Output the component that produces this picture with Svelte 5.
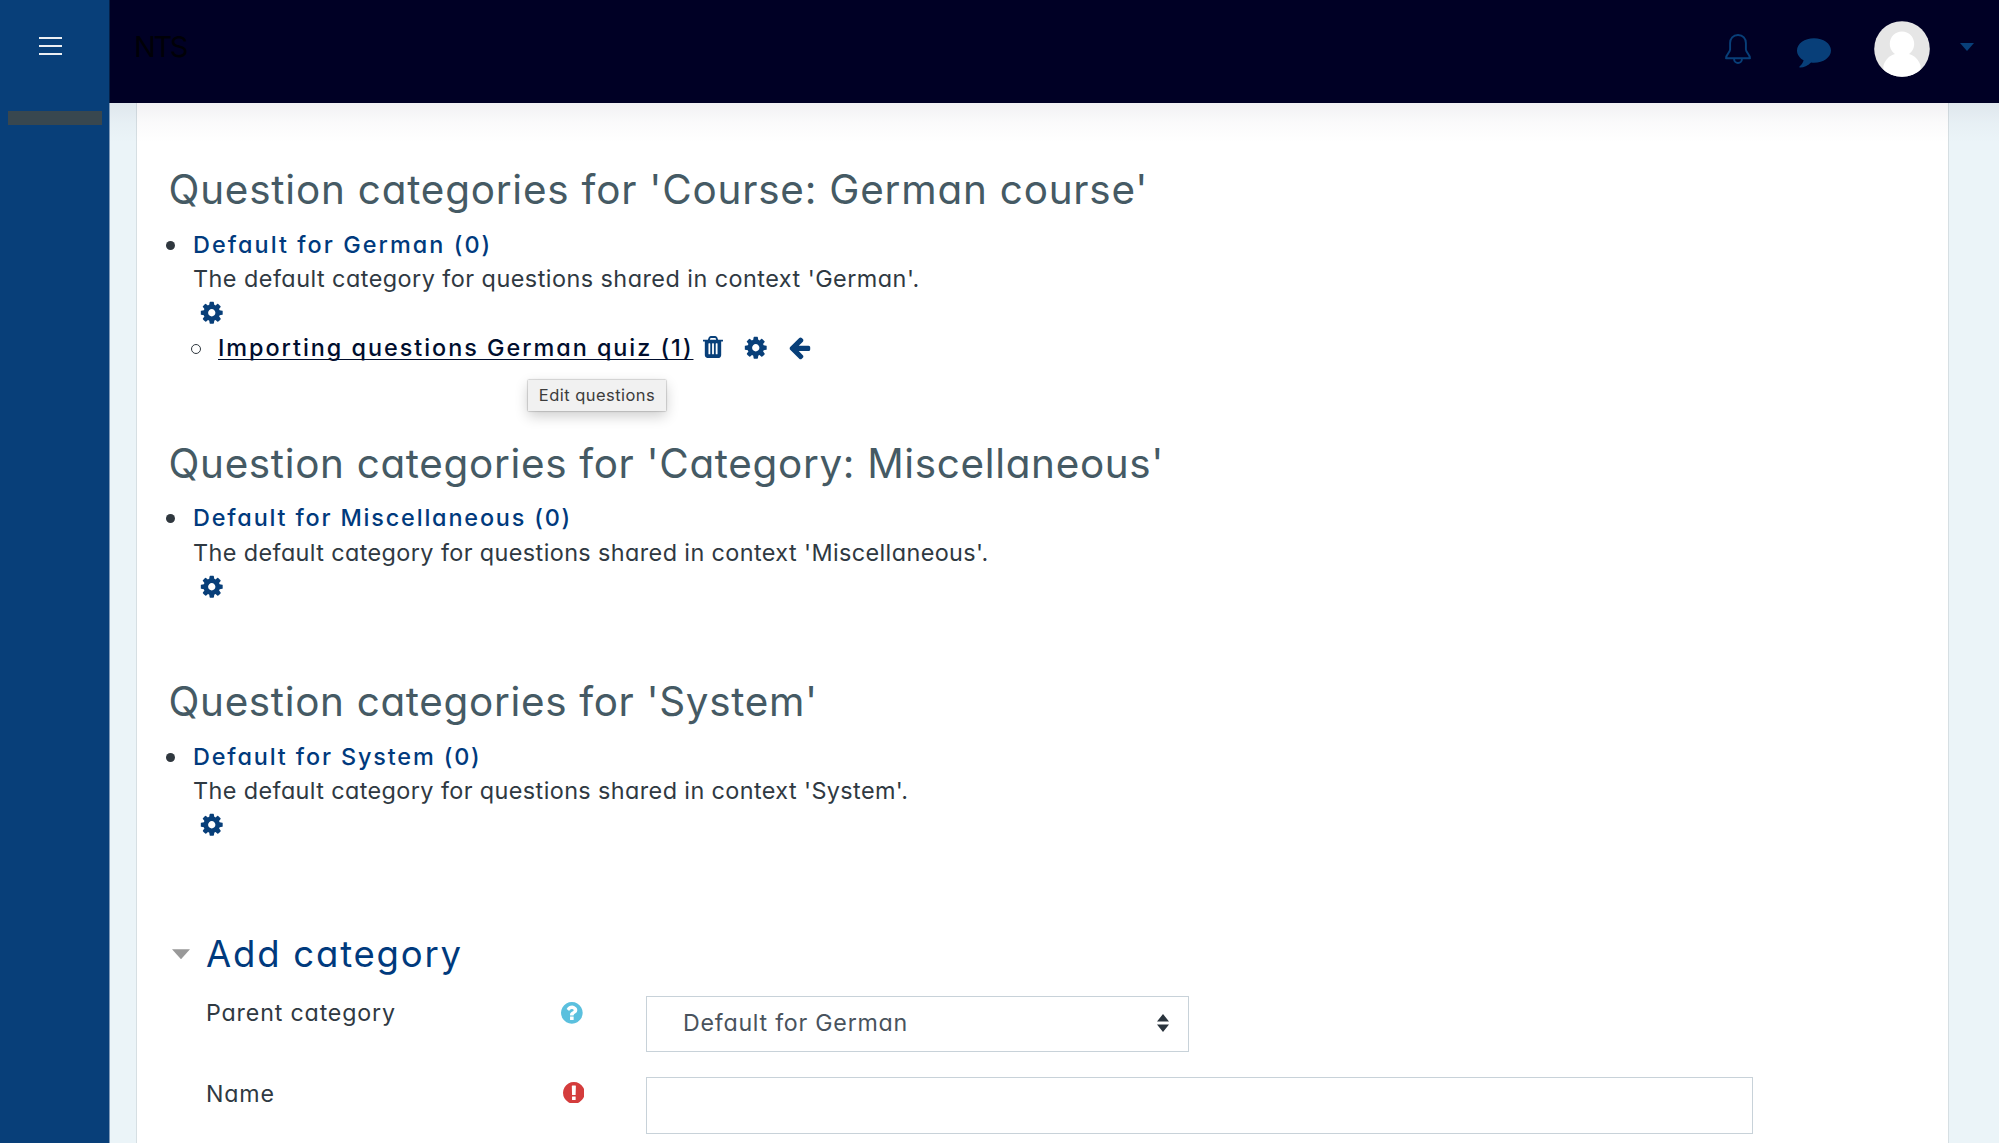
<script>
  const sections = [
    {
      title: "Question categories for 'Course: German course'",
      link: 'Default for German (0)',
      info: "The default category for questions shared in context 'German'.",
      key: 'course',
      child: 'Importing questions German quiz (1)'
    },
    {
      title: "Question categories for 'Category: Miscellaneous'",
      link: 'Default for Miscellaneous (0)',
      info: "The default category for questions shared in context 'Miscellaneous'.",
      key: 'misc'
    },
    {
      title: "Question categories for 'System'",
      link: 'Default for System (0)',
      info: "The default category for questions shared in context 'System'.",
      key: 'system'
    }
  ];
</script>

{#snippet cog()}
  <svg class="cog" viewBox="0 0 1792 1792"><path d="M1152 896q0-106-75-181t-181-75-181 75-75 181 75 181 181 75 181-75 75-181zm512-109v222q0 12-8 23t-20 13l-185 28q-19 54-39 91 35 50 107 138 10 12 10 25t-9 23q-27 37-99 108t-94 71q-12 0-26-9l-138-108q-44 23-91 38-16 136-29 186-7 28-36 28h-222q-14 0-24.500-8.500t-11.500-21.500l-28-184q-49-16-90-37l-141 107q-10 9-25 9-14 0-25-11-126-114-165-168-7-10-7-23 0-12 8-23 15-21 51-66.500t54-70.500q-27-50-41-99l-183-27q-13-2-21-12.500t-8-23.500v-222q0-12 8-23t19-13l186-28q14-46 39-92-40-57-107-138-10-12-10-24 0-10 9-23 26-36 98.500-107.500t94.500-71.500q13 0 26 10l138 107q44-23 91-38 16-136 29-186 7-28 36-28h222q14 0 24.500 8.500t11.500 21.500l28 184q49 16 90 37l142-107q9-9 24-9 13 0 25 10 129 119 165 170 7 8 7 22 0 12-8 23-15 21-51 66.500t-54 70.500q26 50 41 98l183 28q13 2 21 12.500t8 23.500z" /></svg>
{/snippet}

<div class="page">
  <aside>
    <div class="burger"><i></i><i></i><i></i></div>
    <div class="block"></div>
  </aside>
  <div class="right">
    <header>
      <span class="brand">NTS</span>
      <svg class="bell" viewBox="0 0 26 30"><path d="M13 1C8 1 5.100 4.500 5.100 9v6.500C5.100 18.500 1 20.500 1 24.200h24c0-3.700-4.100-5.700-4.100-8.700V9C20.900 4.500 18 1 13 1zM9 24.500c0 6 8 6 8 0" /></svg>
      <svg class="chat" viewBox="0 0 34 30"><path d="M17 .3C26.400.3 34 5.700 34 12.500S26.400 24.700 17 24.700q-1.500 0-2.900-.2C10.500 28 7 29.300 3.300 29.600c-.9.100-1.300-.8-.6-1.400 2-1.600 3.300-3.200 3.900-5.900C2.600 20.100 0 16.500 0 12.500 0 5.700 7.600.3 17 .3z" /></svg>
      <svg class="avatar" viewBox="0 0 56 56">
        <defs><clipPath id="disc"><circle cx="28" cy="28" r="27.800" /></clipPath></defs>
        <g clip-path="url(#disc)">
          <rect width="56" height="56" fill="#e6e6e6" />
          <path fill="#fff" d="M28 10.500c6.700 0 12.200 5.300 12.200 12.200 0 5-2.500 8.300-5.200 10.300 6 1.700 9.500 5.500 11.500 11.500L47 56H9l.5-11.500c2-6 5.500-9.800 11.500-11.500-2.700-2-5.200-5.300-5.200-10.300 0-6.900 5.500-12.200 12.200-12.200z" />
        </g>
      </svg>
      <i class="drop"></i>
    </header>
    <main>
      <div class="card">
        {#each sections as s}
          <section class={s.key}>
            <h2>{s.title}</h2>
            <ul>
              <li>
                <div class="line"><a class="link">{s.link}</a></div>
                <div class="line info">{s.info}</div>
                <div class="line tools">{@render cog()}</div>
                {#if s.child}
                  <ul class="nested">
                    <li>
                      <div class="line">
                        <a class="link hovered">{s.child}<span class="tooltip">Edit questions</span></a>
                        <svg class="trash" viewBox="192 128 1408 1536"><path d="M704 1376v-704q0-14-9-23t-23-9h-64q-14 0-23 9t-9 23v704q0 14 9 23t23 9h64q14 0 23-9t9-23zm256 0v-704q0-14-9-23t-23-9h-64q-14 0-23 9t-9 23v704q0 14 9 23t23 9h64q14 0 23-9t9-23zm256 0v-704q0-14-9-23t-23-9h-64q-14 0-23 9t-9 23v704q0 14 9 23t23 9h64q14 0 23-9t9-23zm-544-992h448l-48-117q-7-9-17-11h-317q-10 2-17 11zm928 32v64q0 14-9 23t-23 9h-96v948q0 83-47 143.500t-113 60.500h-832q-66 0-113-58.500t-47-141.500v-952h-96q-14 0-23-9t-9-23v-64q0-14 9-23t23-9h309l70-167q15-37 54-63t79-26h320q40 0 79 26t54 63l70 167h309q14 0 23 9t9 23z" /></svg>
                        {@render cog()}
                        <svg class="arrow" viewBox="0 0 1792 1792"><path d="M1664 896v128q0 53-32.500 90.500t-84.500 37.500h-704l293 294q38 36 38 90t-38 90l-75 76q-37 37-90 37-52 0-91-37l-651-652q-37-37-37-90 0-52 37-91l651-650q38-38 91-38 52 0 90 38l75 74q38 38 38 91t-38 91l-293 293h704q52 0 84.500 37.500t32.500 90.500z" /></svg>
                      </div>
                    </li>
                  </ul>
                {/if}
              </li>
            </ul>
          </section>
        {/each}
        <form>
          <div class="legend"><i></i><span>Add category</span></div>
          <div class="row">
            <span class="label">Parent category</span>
            <svg class="badge help" viewBox="128 128 1536 1536"><path d="M1024 1376v-192q0-14-9-23t-23-9h-192q-14 0-23 9t-9 23v192q0 14 9 23t23 9h192q14 0 23-9t9-23zm256-672q0-88-55.500-163t-138.500-116-170-41q-243 0-371 213-15 24 8 42l132 100q7 6 19 6 16 0 25-12 53-68 86-92 34-24 86-24 48 0 85.500 26t37.500 59q0 38-20 61t-68 45q-63 28-115.500 86.500t-52.500 125.500v36q0 14 9 23t23 9h192q14 0 23-9t9-23q0-19 21.500-49.500t54.500-49.500q32-18 49-28.500t46-35 44.500-48 28-60.500 12.500-81zm384 192q0 209-103 385.500t-279.500 279.500-385.500 103-385.500-103-279.500-279.500-103-385.500 103-385.500 279.500-279.500 385.500-103 385.500 103 279.500 279.500 103 385.500z" /></svg>
            <div class="select">
              <span>Default for German</span>
              <svg viewBox="0 0 12 18"><path d="M6 0l6 7.500H0zM6 18l6-7.500H0z" /></svg>
            </div>
          </div>
          <div class="row name">
            <span class="label">Name</span>
            <svg class="badge required" viewBox="128 128 1536 1536"><path d="M896 128q209 0 385.500 103t279.500 279.500 103 385.500-103 385.500-279.500 279.500-385.500 103-385.500-103-279.500-279.500-103-385.500 103-385.500 279.500-279.500 385.500-103zm128 1247v-190q0-14-9-23.500t-22-9.500h-192q-13 0-23 10t-10 23v190q0 13 10 23t23 10h192q13 0 22-9.500t9-23.500zm-2-344l18-621q0-12-10-18-10-8-24-8h-220q-14 0-24 8-10 6-10 18l17 621q0 10 10 17.500t24 7.500h185q14 0 23.500-7.500t10.500-17.500z" /></svg>
            <div class="input"></div>
          </div>
        </form>
      </div>
    </main>
  </div>
</div>

<style>
  :global(body) { margin: 0; background: #fff; overflow: hidden; }
  .page {
    display: flex;
    height: 1143px;
    overflow: hidden;
    font-family: Inter, 'Open Sans', sans-serif;
    font-feature-settings: 'cv11' 1;
    font-size: 23.200px;
    font-weight: 400;
    color: #2f3942;
    white-space: nowrap;
  }
  svg { display: block; flex: none; }

  aside {
    box-sizing: border-box;
    width: 109px;
    flex: none;
    background: #083f79;
    padding: 37px 7px 0 8px;
  }
  .burger { display: flex; flex-direction: column; gap: 6px; width: 23px; margin-left: 31px; }
  .burger i { height: 2px; background: #eceff3; }
  .block { margin-top: 56px; height: 14px; background: #38474f; }

  .right { flex: 1; min-width: 0; display: flex; flex-direction: column; border-left: 1px solid #7f9ab8; }
  header {
    box-sizing: border-box;
    height: 103px;
    flex: none;
    margin-left: -1px;
    padding-left: 26px;
    background: #000025;
    display: flex;
    align-items: flex-start;
    border-left: 1px solid #042048;
  }
  .brand { color: #000007; font-size: 29px; font-weight: 400; letter-spacing: -2.400px; line-height: 40px; margin: 27px auto 0 -2px; }
  .bell { width: 26px; height: 30px; margin: 34px 46px 0 0; fill: none; stroke: #083f79; stroke-width: 1.900; stroke-linejoin: round; overflow: visible; }
  .chat { width: 34px; height: 30px; margin: 37.500px 43px 0 0; fill: #083f79; }
  .avatar { width: 56px; height: 56px; margin: 21px 30px 0 0; }
  .drop { width: 14px; height: 8px; margin: 43px 25px 0 0; background: #083f79; clip-path: polygon(0 0, 100% 0, 50% 100%); }

  main { flex: 1; min-height: 0; padding: 0 50px 0 26px; background: #ebf4f8; position: relative; }
  main::after {
    content: '';
    position: absolute;
    inset: 0 0 auto 0;
    height: 40px;
    background: linear-gradient(rgba(30, 20, 60, .06), rgba(30, 20, 60, .02) 50%, transparent);
  }
  .card {
    box-sizing: border-box;
    height: 1040px;
    background: #fff;
    border: solid #d6dfe3;
    border-width: 0 1px;
    padding: 63.400px 0 0 31.500px;
  }
  section { height: 273.300px; }
  section.misc { height: 238.700px; }
  section.system { height: 253.800px; }
  h2 { margin: 0 0 13.600px; font-size: 40.400px; font-weight: 400; line-height: 48px; letter-spacing: .800px; color: #455a64; }
  .misc h2, .system h2 { letter-spacing: .680px; }
  ul { list-style: none; margin: 0; padding: 0 0 0 24.500px; }
  li { position: relative; }
  li::before {
    content: '';
    position: absolute;
    left: -27px;
    top: 13px;
    width: 9px;
    height: 9px;
    border-radius: 50%;
    background: #30383f;
  }
  .nested li::before { box-sizing: border-box; left: -27.500px; top: 12.500px; width: 10px; height: 10px; background: none; border: 1.500px solid #30383f; }
  .line { height: 34.400px; line-height: 34.400px; display: flex; align-items: center; }
  .link { color: #003a7d; font-size: 23.400px; font-weight: 500; letter-spacing: 2.060px; position: relative; }
  .misc .link { letter-spacing: 1.830px; }
  .system .link { letter-spacing: 1.870px; }
  .info { font-size: 23.400px; letter-spacing: .470px; }
  .misc .info, .system .info { letter-spacing: .400px; }
  .tools { padding-left: 6px; }
  .tools .cog { margin-top: -2px; }
  .cog { width: 25.500px; height: 25.500px; fill: #083f79; }
  .nested { padding-left: 25px; }
  .nested svg { margin-top: -2px; }
  .link.hovered {
    color: #000e2e;
    width: 474px;
    letter-spacing: 1.970px;
    text-decoration: underline;
    text-decoration-thickness: 1px;
    text-underline-offset: 3px;
    text-decoration-skip-ink: none;
  }
  .trash { width: 20px; height: 22px; margin: 0 20px 0 10.500px; fill: #083f79; }
  .arrow { width: 25px; height: 25px; margin-left: 18.500px; fill: #083f79; }
  .tooltip {
    position: absolute;
    left: 310px;
    top: 49px;
    box-sizing: border-box;
    width: 138px;
    height: 31px;
    line-height: 30px;
    text-align: center;
    background: #f1f1f1;
    color: #3c3c3c;
    font-size: 16.500px;
    font-weight: 400;
    font-feature-settings: 'cv11' 0;
    letter-spacing: .45px;
    box-shadow: 0 0 1.500px rgba(0, 0, 0, .5), 0 5px 14px rgba(0, 0, 0, .2);
  }

  .legend { display: flex; align-items: center; height: 44px; font-size: 36.500px; color: #003a7d; letter-spacing: 1.800px; }
  .legend i { width: 18px; height: 10px; margin-left: 3.500px; background: #999; clip-path: polygon(0 0, 100% 0, 50% 100%); }
  .legend span { margin-left: 16px; }
  .row { display: flex; align-items: flex-start; margin: 19.400px 0 0 37.500px; }
  .row.name { margin-top: 25px; }
  .label { width: 355px; line-height: 34px; letter-spacing: .85px; flex: none; }
  .badge { width: 21.700px; height: 21.700px; margin: 6.800px 0 0 0; }
  .help { fill: #5bc0de; }
  .required { fill: #d43c3c; margin: 5px 0 0 1.500px; }
  .select, .input { box-sizing: border-box; border: 1.500px solid #c8d2d9; background: #fff; margin-left: 63.300px; }
  .select {
    width: 543px;
    height: 56px;
    padding: 0 19px 2px 36px;
    display: flex;
    align-items: center;
    justify-content: space-between;
    color: #49535d;
    letter-spacing: .760px;
  }
  .select svg { width: 12px; height: 18px; fill: #2a343d; }
  .input { width: 1107px; height: 57px; margin-left: 61.800px; }
</style>
